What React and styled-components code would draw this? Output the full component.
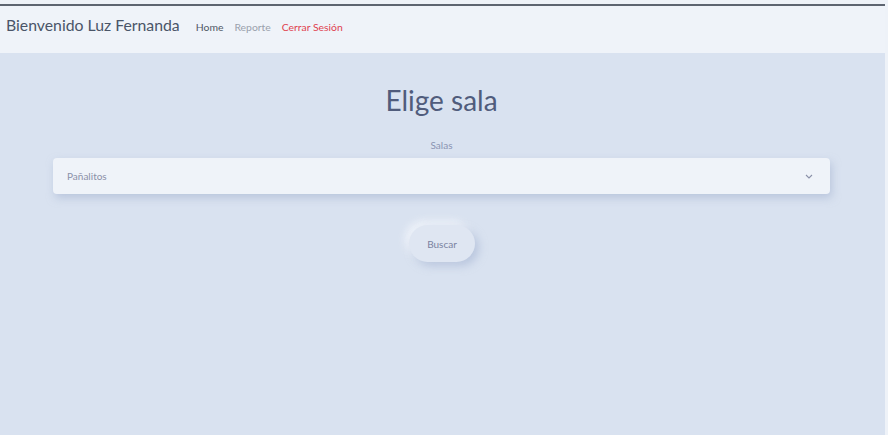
import React from "react";
import styled, { createGlobalStyle } from "styled-components";

const Global = createGlobalStyle`
  html, body { margin: 0; padding: 0; }
  body {
    background: #eef2f8;
    font-family: "Lato", "Noto Sans", sans-serif;
    padding-top: 4px;
  }
`;

const Page = styled.div`
  width: calc(100% - 3px);
  height: 431px;
  background: #d9e2f0;
  display: flex;
  flex-direction: column;
`;

const Header = styled.header`
  height: 49px;
  box-sizing: border-box;
  border-top: 2px solid #5d6470;
  background: #eff3f9;
  display: flex;
  align-items: baseline;
  padding: 9px 0 0 6px;
  gap: 16px;
`;

const Brand = styled.div`
  font-size: 15.8px;
  color: #4a5568;
`;

const Nav = styled.nav`
  display: flex;
  gap: 11px;
  font-size: 10.4px;
`;

const NavLink = styled.a`
  color: ${(p) => p.$color};
  text-decoration: none;
`;

const Main = styled.main`
  display: flex;
  flex-direction: column;
  align-items: center;
  padding: 30px 55px 0 53px;
`;

const Title = styled.h1`
  margin: 0;
  font-weight: 400;
  font-size: 28px;
  color: #505c7c;
`;

const Label = styled.label`
  margin-top: 22px;
  font-size: 10px;
  color: #8a94b2;
`;

const Select = styled.div`
  align-self: stretch;
  margin-top: 7px;
  height: 36px;
  border-radius: 4px;
  background: #eff3f9;
  box-shadow: 2px 4px 8px rgba(160, 175, 205, 0.55);
  display: flex;
  align-items: center;
  justify-content: space-between;
  padding: 0 17px 0 14px;
  font-size: 10px;
  color: #8a90a8;
`;

const Button = styled.button`
  margin-top: 31px;
  width: 66px;
  height: 37px;
  border: none;
  border-radius: 19px;
  background: #dfe6f2;
  box-shadow: 4px 4px 8px rgba(165, 180, 210, 0.6),
    -4px -4px 8px rgba(245, 248, 253, 0.8);
  font-family: inherit;
  font-size: 10px;
  color: #7a82a0;
  margin-left: 1px;
`;

export default function App() {
  return (
    <>
      <Global />
      <Page>
        <Header>
          <Brand>Bienvenido Luz Fernanda</Brand>
          <Nav>
            <NavLink $color="#505866">Home</NavLink>
            <NavLink $color="#9aa1ad">Reporte</NavLink>
            <NavLink $color="#e0414f">Cerrar Sesión</NavLink>
          </Nav>
        </Header>
        <Main>
          <Title>Elige sala</Title>
          <Label>Salas</Label>
          <Select>
            <span>Pañalitos</span>
            <svg width="8" height="5" viewBox="0 0 8 5">
              <path d="M1 1l3 3 3-3" fill="none" stroke="#8a90a8" strokeWidth="1.1" />
            </svg>
          </Select>
          <Button>Buscar</Button>
        </Main>
      </Page>
    </>
  );
}
